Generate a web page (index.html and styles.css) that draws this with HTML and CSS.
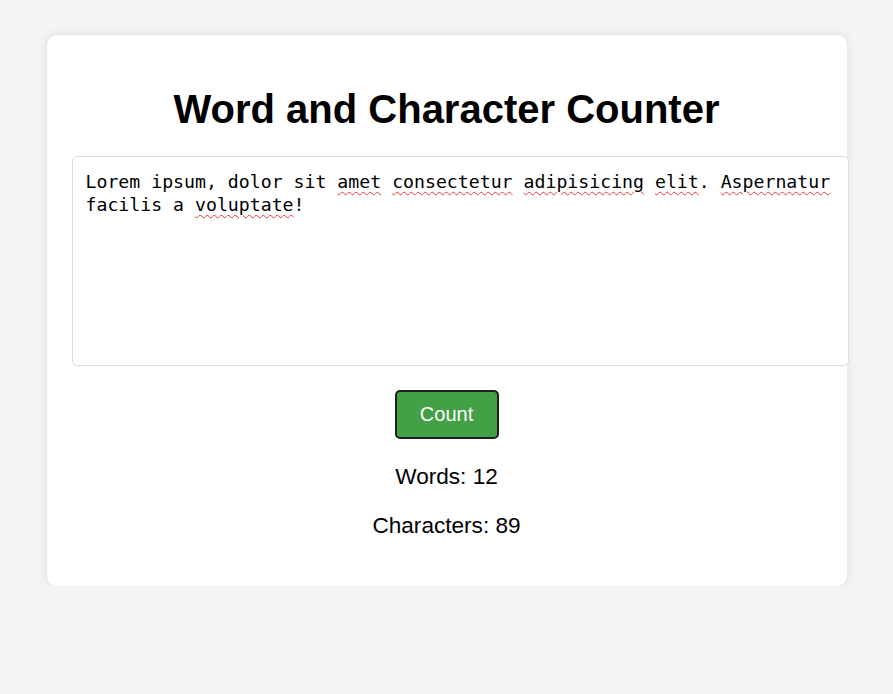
FILE: index.html
```html
<!DOCTYPE html>
<html lang="en">
<head>
<meta charset="utf-8">
<title>Word and Character Counter</title>
<link rel="stylesheet" href="styles.css">
</head>
<body>
<div class="card">
  <h1 class="title">Word and Character Counter</h1>
  <div class="input" role="textbox" aria-multiline="true" contenteditable="true" spellcheck="false">Lorem ipsum, dolor sit <span class="typo">amet</span> <span class="typo">consectetur</span> <span class="typo">adipisicing</span> <span class="typo">elit</span>. <span class="typo">Aspernatur</span> facilis a <span class="typo">voluptate</span>!</div>
  <div class="actions">
    <button class="btn" type="button">Count</button>
  </div>
  <p class="stat">Words: 12</p>
  <p class="stat">Characters: 89</p>
</div>
</body>
</html>
```

FILE: styles.css
```css
html, body {
  margin: 0;
  padding: 0;
}
body {
  background: #f4f4f4;
  font-family: "Liberation Sans", Arial, sans-serif;
  color: #000;
  padding-top: 35px;
}
.card {
  width: 800px;
  box-sizing: border-box;
  margin: 0 auto;
  background: #fff;
  border-radius: 10px;
  box-shadow: 0 0 10px rgba(0, 0, 0, 0.1);
  padding: 25px 25px 48px;
  text-align: center;
}
.title {
  font-size: 40px;
  line-height: 46px;
  font-weight: bold;
  margin: 26px 0 24px;
}
.input {
  width: 777px;
  height: 210px;
  box-sizing: border-box;
  padding: 13px 13px 11px;
  border: 1px solid #ddd;
  border-radius: 5px;
  font-family: "DejaVu Sans Mono", "Liberation Mono", monospace;
  font-size: 18.2px;
  line-height: 23px;
  text-align: left;
  color: #000;
  outline: none;
  background: #fff;
  overflow: hidden;
  white-space: pre-wrap;
  word-wrap: break-word;
}
.typo {
  text-decoration: underline wavy #e53935;
  text-decoration-thickness: 1px;
  text-underline-offset: 3px;
}
.actions {
  margin-top: 24px;
}
.btn {
  width: 104px;
  height: 49px;
  box-sizing: border-box;
  background: #43a047;
  color: #fff;
  border: 2px solid #1f1f1f;
  border-radius: 5px;
  font-family: "Liberation Sans", Arial, sans-serif;
  font-size: 20px;
  cursor: pointer;
}
.stat {
  font-size: 22.6px;
  line-height: 25px;
  margin: 25px 0 0;
}
.stat + .stat {
  margin-top: 24px;
}
```
